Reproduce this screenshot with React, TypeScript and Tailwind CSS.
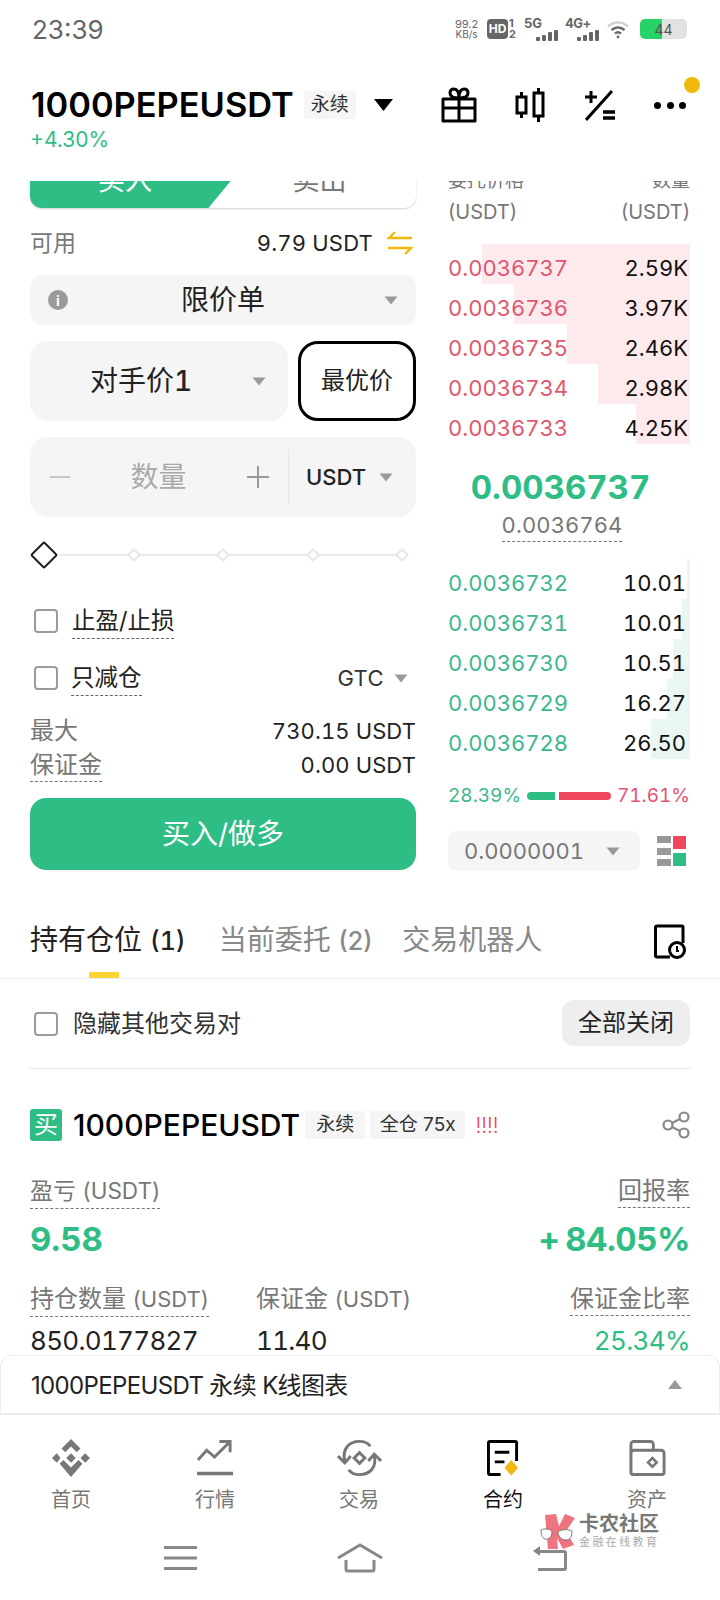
import React from "react";

const asks = [
  { price: "0.0036737", qty: "2.59K", left: "w-[208px]" },
  { price: "0.0036736", qty: "3.97K", left: "w-[176px]" },
  { price: "0.0036735", qty: "2.46K", left: "w-[123px]" },
  { price: "0.0036734", qty: "2.98K", left: "w-[92px]" },
  { price: "0.0036733", qty: "4.25K", left: "w-[54px]" },
];

const bids = [
  { price: "0.0036732", qty: "10.01", left: "w-[3px]" },
  { price: "0.0036731", qty: "10.01", left: "w-[8px]" },
  { price: "0.0036730", qty: "10.51", left: "w-[17px]" },
  { price: "0.0036729", qty: "16.27", left: "w-[23px]" },
  { price: "0.0036728", qty: "26.50", left: "w-[39px]" },
];

function Caret({ className = "" }: { className?: string }) {
  return (
    <svg viewBox="0 0 14 9" className={`w-[14px] h-[9px] fill-[#9a9a9a] ${className}`}>
      <path d="M0.5 0.5h13L7 8.5z" />
    </svg>
  );
}

function Checkbox() {
  return <span className="w-6 h-6 rounded-[4px] border-2 border-[#9b9b9b] bg-white shrink-0" />;
}

function Dot({ active = false }: { active?: boolean }) {
  return (
    <span className="relative w-[20px] flex items-center justify-center">
      {active ? (
        <span className="w-[20px] h-[20px] rotate-45 border-2 border-[#222] bg-white rounded-[2px] shrink-0" />
      ) : (
        <span className="w-[10px] h-[10px] rotate-45 border-2 border-[#e8e8e8] bg-white rounded-[1px] shrink-0" />
      )}
    </span>
  );
}

function SignalBars() {
  return (
    <div className="absolute right-0 bottom-0 flex items-end gap-[2px]">
      <span className="w-[4px] h-[4px] bg-[#666] rounded-[1px]" />
      <span className="w-[4px] h-[6px] bg-[#666] rounded-[1px]" />
      <span className="w-[4px] h-[9px] bg-[#666] rounded-[1px]" />
      <span className="w-[4px] h-[11px] bg-[#666] rounded-[1px]" />
    </div>
  );
}

function StatusBar() {
  return (
    <div className="h-[58px] pl-[32px] pr-[33px] flex items-center justify-between">
      <span className="text-[26px] text-[#666]">23:39</span>
      <div className="flex items-center text-[#666]">
        <div className="w-[25px] flex flex-col items-center text-[10px] leading-[10px]">
          <span className="text-[11px]">99.2</span>
          <span>KB/s</span>
        </div>
        <div className="ml-[8px] w-[21px] h-[20px] rounded-[4px] bg-[#666] text-white text-[12px] font-bold flex items-center justify-center">
          HD
        </div>
        <div className="ml-[1px] flex flex-col text-[11px] leading-[11px] font-bold">
          <span>1</span>
          <span>2</span>
        </div>
        <div className="ml-[8px] w-[34px] relative h-[24px]">
          <span className="absolute left-0 -top-[3px] text-[13px] font-bold">5G</span>
          <SignalBars />
        </div>
        <div className="ml-[7px] w-[34px] relative h-[24px]">
          <span className="absolute left-0 -top-[3px] text-[13px] font-bold tracking-[-0.5px]">4G+</span>
          <SignalBars />
        </div>
        <svg viewBox="0 0 24 20" className="ml-[8px] w-[24px] h-[20px] fill-none stroke-[#666]" strokeWidth="2.4">
          <path d="M1 7.5c6-5.5 14-5.5 20 0" stroke="#cfcfcf" />
          <path d="M4.5 11c4-3.5 9-3.5 13 0" />
          <path d="M8 14.5c2-1.6 4-1.6 6 0" />
          <circle cx="11" cy="18" r="1.4" fill="#666" stroke="none" />
        </svg>
        <div className="ml-[9px] w-[47px] h-[20px] rounded-[5px] bg-[#e2e2e2] overflow-hidden relative flex items-center justify-center">
          <div className="absolute left-0 inset-y-0 w-[22px] bg-[#25d366]" />
          <span className="relative text-[14px] text-[#555]">44</span>
        </div>
      </div>
    </div>
  );
}

function Header() {
  return (
    <div className="h-[123px] pl-[31px] pr-[34px] relative">
      <div className="flex items-center pt-[28px]">
        <span className="text-[34.4px] leading-[38px] font-semibold text-black">1000PEPEUSDT</span>
        <span className="ml-[10px] w-[52px] h-[28px] bg-[#f5f5f5] rounded-[2px] text-[19px] text-[#333] flex items-center justify-center">
          永续
        </span>
        <svg viewBox="0 0 19 12" className="ml-[18px] w-[19px] h-[12px] fill-black">
          <path d="M0 0h19L9.5 12z" />
        </svg>
        <div className="ml-auto flex items-center">
          <svg viewBox="0 0 36 36" className="w-[36px] h-[36px] fill-none stroke-black" strokeWidth="3" strokeLinejoin="round">
            <path d="M2 12h32v22H2zM2 21h32M18 12v22" />
            <path d="M18 11c-7 0-9-2-9-5s2-4 4-4c3 0 5 3 5 9zM18 11c7 0 9-2 9-5s-2-4-4-4c-3 0-5 3-5 9z" />
          </svg>
          <svg viewBox="0 0 30 34" className="ml-[38px] w-[30px] h-[34px] fill-none stroke-black" strokeWidth="3">
            <path d="M2 9h9v16H2zM6.5 4v5M6.5 25v5M19 5h9v23h-9zM23.5 0v5M23.5 28v6" />
          </svg>
          <svg viewBox="0 0 30 32" className="ml-[40px] w-[30px] h-[32px] fill-none stroke-black" strokeWidth="3">
            <path d="M1 31 27 2M0 8h12M6 2v12" />
            <path d="M18 23h12M18 29h12" strokeWidth="3.4" />
          </svg>
          <div className="ml-[39px] w-[32px] flex items-center justify-between">
            <span className="w-[7px] h-[7px] rounded-full bg-black" />
            <span className="w-[7px] h-[7px] rounded-full bg-black" />
            <span className="w-[7px] h-[7px] rounded-full bg-black" />
          </div>
        </div>
      </div>
      <div className="text-[21px] leading-[26px] mt-[3px] text-[#2ebd85] -ml-[1px]">+4.30%</div>
      <span className="absolute right-[20px] top-[19px] w-4 h-4 rounded-full bg-[#f0b90b]" />
    </div>
  );
}

function OrderForm() {
  return (
    <div className="w-[386px] shrink-0">
      {/* buy/sell switch, half scrolled away */}
      <div className="-mt-[27px] h-[54px] rounded-b-[12px] bg-white shadow-[0_1px_2px_rgba(0,0,0,0.18)] flex relative">
        <div className="w-[223px] bg-[#2ebd85] rounded-bl-[12px] [clip-path:polygon(0_0,100%_0,80%_100%,0_100%)] flex items-center justify-center text-white text-[27px] pr-[33px]">
          买入
        </div>
        <div className="flex-1 flex items-center justify-center text-[#777] text-[27px] pr-[30px]">卖出</div>
      </div>

      <div className="mt-[17px] h-[36px] flex items-center text-[22px]">
        <span className="text-[#777] text-[23px]">可用</span>
        <span className="ml-auto text-[#222] tracking-[0.2px] tabular-nums">9.79 USDT</span>
        <svg viewBox="0 0 26 24" className="ml-[14px] mr-[3px] w-[26px] h-[24px] fill-none stroke-[#f0b90b]" strokeWidth="2.4">
          <path d="M25 7H2L8 1M1 17h23l-6 6" />
        </svg>
      </div>

      <div className="mt-[14px] h-[50px] rounded-[12px] bg-[#f5f5f5] flex items-center relative px-[18px]">
        <span className="w-5 h-5 rounded-full bg-[#9a9a9a] text-white text-[14px] font-bold flex items-center justify-center">i</span>
        <span className="flex-1 text-center text-[28px] text-[#222] pr-[6px]">限价单</span>
        <Caret />
      </div>

      <div className="mt-[16px] flex gap-[10px]">
        <div className="w-[258px] h-[80px] rounded-[18px] bg-[#f5f5f5] flex items-center pr-[22px]">
          <span className="flex-1 text-center text-[28px] text-[#222] tabular-nums">对手价<span className="font-medium">1</span></span>
          <Caret />
        </div>
        <div className="w-[118px] h-[80px] rounded-[20px] border-[3px] border-black bg-white flex items-center justify-center text-[24px] text-[#222]">
          最优价
        </div>
      </div>

      <div className="mt-[16px] h-[80px] rounded-[18px] bg-[#f5f5f5] flex items-center">
        <div className="w-[258px] flex items-center pl-[20px] pr-[19px]">
          <span className="w-[20px] h-[2px] bg-[#c8c8c8]" />
          <span className="flex-1 text-center text-[28px] text-[#aaa]">数量</span>
          <svg viewBox="0 0 22 22" className="w-[22px] h-[22px] stroke-[#999]" strokeWidth="2">
            <path d="M0 11h22M11 0v22" />
          </svg>
        </div>
        <div className="self-stretch my-[12px] w-[1px] bg-[#e8e8e8]" />
        <span className="ml-[17px] text-[22px] font-medium text-[#222]">USDT</span>
        <Caret className="ml-[13px]" />
      </div>

      {/* leverage slider */}
      <div className="mt-[24px] h-[28px] relative flex items-center justify-between px-[4px]">
        <div className="absolute left-[14px] right-[14px] h-[2px] bg-[#ececec]" />
        <Dot active />
        <Dot />
        <Dot />
        <Dot />
        <Dot />
      </div>

      <div className="mt-[32px] h-[40px] flex items-center pl-[4px]">
        <Checkbox />
        <span className="ml-[14px] text-[23.5px] leading-[34px] text-[#222] border-b border-dashed border-[#666]">止盈/止损</span>
      </div>
      <div className="mt-[17px] h-[40px] flex items-center pl-[4px]">
        <Checkbox />
        <span className="ml-[13px] text-[23.5px] leading-[34px] text-[#222] border-b border-dashed border-[#666]">只减仓</span>
        <span className="ml-auto text-[22px] text-[#333] tracking-[0.4px]">GTC</span>
        <Caret className="ml-[10px] mr-[8px]" />
      </div>

      <div className="mt-[16px] h-[34px] flex items-center justify-between">
        <span className="text-[24px] text-[#777]">最大</span>
        <span className="text-[22px] text-[#222] tracking-[0.1px] tabular-nums">730.15 USDT</span>
      </div>
      <div className="h-[34px] flex items-center justify-between">
        <span className="text-[24px] leading-[33px] text-[#777] border-b border-dashed border-[#777]">保证金</span>
        <span className="text-[22px] text-[#222] tracking-[0.1px] tabular-nums">0.00 USDT</span>
      </div>

      <div className="mt-[16px] h-[72px] rounded-[16px] bg-[#2ebd85] flex items-center justify-center text-white text-[28px]">
        买入/做多
      </div>
    </div>
  );
}

function OrderBook() {
  return (
    <div className="flex-1 min-w-0">
      <div className="-mt-[14px] h-[28px] flex items-center justify-between text-[19px] leading-[28px] text-[#777]">
        <span>委托价格</span>
        <span>数量</span>
      </div>
      <div className="h-[34px] flex items-center justify-between text-[20px] text-[#777]">
        <span>(USDT)</span>
        <span>(USDT)</span>
      </div>

      <div className="mt-[19px]">
        {asks.map((row) => (
          <div key={row.price} className="h-[40px] relative flex items-center justify-between text-[22px] tabular-nums">
            <div className={`absolute right-0 -top-[4px] bottom-[4px] bg-[#fdeaec] ${row.left}`} />
            <span className="relative text-[#e2566f]">{row.price}</span>
            <span className="relative text-[#111] pr-[2px]">{row.qty}</span>
          </div>
        ))}
      </div>

      <div className="mt-[15px] text-center text-[33px] leading-[48px] font-bold text-[#2ebd85] pr-[17px] tabular-nums">0.0036737</div>
      <div className="flex justify-center pr-[14px]">
        <span className="text-[22px] leading-[31px] -mt-[1px] text-[#777] border-b border-dashed border-[#777] tabular-nums tracking-[0.1px]">0.0036764</span>
      </div>

      <div className="mt-[21px]">
        {bids.map((row) => (
          <div key={row.price} className="h-[40px] relative flex items-center justify-between text-[22px] tabular-nums">
            <div className={`absolute right-0 -top-[4px] bottom-[4px] bg-[#e9f6f1] ${row.left}`} />
            <span className="relative text-[#3bb78f]">{row.price}</span>
            <span className="relative text-[#111] pr-[4px]">{row.qty}</span>
          </div>
        ))}
      </div>

      <div className="mt-[17px] h-[32px] flex items-center justify-between text-[19px] tabular-nums">
        <span className="text-[#3bb78f]">28.39%</span>
        <div className="flex gap-[4px]">
          <span className="w-[28px] h-[8px] bg-[#2ebd85] rounded-l-full" />
          <span className="w-[52px] h-[8px] bg-[#f0475f] rounded-r-full" />
        </div>
        <span className="text-[#e2566f]">71.61%</span>
      </div>

      <div className="mt-[19px] flex items-center justify-between">
        <div className="w-[192px] h-[40px] rounded-[8px] bg-[#f5f5f5] flex items-center pl-[16px] pr-[20px] justify-between">
          <span className="text-[22px] text-[#777] tabular-nums">0.0000001</span>
          <Caret />
        </div>
        <div className="mr-[4px] grid grid-cols-[14px_13px] gap-x-[2px] w-[29px] h-[30px]">
          <div className="flex flex-col justify-between">
            <span className="h-[7px] bg-[#999]" />
            <span className="h-[7px] bg-[#999]" />
            <span className="h-[7px] bg-[#999]" />
          </div>
          <div className="flex flex-col justify-between">
            <span className="h-[13px] bg-[#f0475f]" />
            <span className="h-[13px] bg-[#2ebd85]" />
          </div>
        </div>
      </div>
    </div>
  );
}

function PositionTabs() {
  return (
    <>
      <div className="mt-[39px] h-[69px] border-b border-[#eee] relative pl-[30px] pr-[34px] flex items-start pt-[9px]">
        <span className="text-[28px] leading-[42px] text-[#222]">
          持有仓位 <span className="text-[25px] font-medium tabular-nums">(1)</span>
        </span>
        <span className="ml-[33px] text-[28px] leading-[42px] text-[#888]">
          当前委托 <span className="text-[25px] font-medium">(2)</span>
        </span>
        <span className="ml-[30px] text-[28px] leading-[42px] text-[#888]">交易机器人</span>
        <svg viewBox="0 0 32 36" className="ml-auto mt-[5px] w-[32px] h-[36px] fill-none stroke-black" strokeWidth="3">
          <path d="M16 33H3a1.5 1.5 0 0 1-1.5-1.5v-28A1.5 1.5 0 0 1 3 2h25a1 1 0 0 1 1 1v16" />
          <circle cx="23" cy="26" r="7.5" />
          <path d="M23 22v5h2" strokeWidth="2" />
        </svg>
        <span className="absolute left-[89px] bottom-0 w-[30px] h-[6px] bg-[#fcd535]" />
      </div>
      <div className="h-[90px] mx-[30px] border-b border-[#e8e8e8] flex items-center pl-[4px]">
        <Checkbox />
        <span className="ml-[15px] text-[24px] text-[#333]">隐藏其他交易对</span>
        <span className="ml-auto w-[128px] h-[46px] rounded-[12px] bg-[#eee] text-[24px] text-[#222] flex items-center justify-center mt-[-2px]">
          全部关闭
        </span>
      </div>
    </>
  );
}

function PositionCard() {
  return (
    <div className="px-[30px] pt-[39px]">
      <div className="h-[34px] flex items-center">
        <span className="w-[32px] h-[32px] rounded-[3px] bg-[#2ebd85] text-white text-[24px] flex items-center justify-center">买</span>
        <span className="ml-[11px] text-[30px] font-medium text-black">1000PEPEUSDT</span>
        <span className="ml-[5px] w-[60px] h-[28px] rounded-[2px] bg-[#f5f5f5] text-[19px] text-[#333] flex items-center justify-center">永续</span>
        <span className="ml-[5px] w-[95px] h-[28px] rounded-[2px] bg-[#f5f5f5] text-[19px] text-[#333] flex items-center justify-center">全仓 75x</span>
        <span className="ml-[10px] text-[22px] text-[#f0475f] font-light tracking-[-0.4px]">!!!!</span>
        <svg viewBox="0 0 28 28" className="ml-auto w-[28px] h-[28px] fill-none stroke-[#888]" strokeWidth="2.2">
          <circle cx="22" cy="6" r="4.5" />
          <circle cx="6" cy="14" r="4.5" />
          <circle cx="22" cy="22" r="4.5" />
          <path d="M10 12l8-4M10 16l8 4" />
        </svg>
      </div>

      <div className="mt-[32px] flex justify-between items-start">
        <span className="text-[23px] leading-[33px] text-[#777] border-b border-dashed border-[#777]">盈亏 <span className="text-[22.5px]">(USDT)</span></span>
        <span className="text-[24px] leading-[33px] text-[#777] border-b border-dashed border-[#777]">回报率</span>
      </div>
      <div className="mt-[5px] flex justify-between items-center text-[33px] leading-[50px] font-bold text-[#2ebd85] tabular-nums">
        <span>9.58</span>
        <span className="tracking-[-0.5px]">
          +<span className="ml-[6px]">84.05%</span>
        </span>
      </div>

      <div className="mt-[18px] flex items-start">
        <span className="w-[226px] shrink-0">
          <span className="inline-block text-[24px] leading-[33px] text-[#777] border-b border-dashed border-[#777]">持仓数量 <span className="text-[22px]">(USDT)</span></span>
        </span>
        <span className="text-[24px] leading-[33px] text-[#777]">保证金 <span className="text-[22px]">(USDT)</span></span>
        <span className="ml-auto text-[24px] leading-[33px] text-[#777] border-b border-dashed border-[#777]">保证金比率</span>
      </div>
      <div className="mt-[4px] flex items-center text-[26px] leading-[40px] text-[#222] tabular-nums tracking-[-0.7px]">
        <span className="w-[226px] shrink-0">850.0177827</span>
        <span>11.40</span>
        <span className="ml-auto text-[#2ebd85] tracking-[-0.6px]">25.34%</span>
      </div>
    </div>
  );
}

function ChartBar() {
  return (
    <div className="h-[60px] shrink-0 rounded-t-[12px] border border-b-2 border-[#eee] bg-white flex items-center pl-[30px] pr-[37px] relative">
      <span className="text-[24px] text-[#222] tracking-[-0.65px] pt-[3px]">1000PEPEUSDT 永续 K线图表</span>
      <svg viewBox="0 0 14 9" className="ml-auto w-[14px] h-[9px] fill-[#999]">
        <path d="M7 0l7 9H0z" />
      </svg>
    </div>
  );
}

function NavItem({ label, active = false, children }: { label: string; active?: boolean; children: React.ReactNode }) {
  return (
    <div className={`w-[144px] flex flex-col items-center ${active ? "text-[#111]" : "text-[#777]"}`}>
      <div className="h-[40px] flex items-center justify-center">{children}</div>
      <span className="mt-[5px] text-[20px] leading-[34px]">{label}</span>
    </div>
  );
}

function BottomNav() {
  return (
    <div className="pt-[23px] -ml-[1px] flex">
      <NavItem label="首页">
        <svg viewBox="0 0 40 40" className="w-[38px] h-[38px] fill-[#777]">
          <path d="M20 0l10 10-4 4-6-6-6 6-4-4zM5 15l4 5-4 5-5-5zM35 15l5 5-5 5-5-5zM20 15l5 5-5 5-5-5zM8 26l4-4 8 8 8-8 4 4-12 14z" />
        </svg>
      </NavItem>
      <NavItem label="行情">
        <svg viewBox="0 0 38 38" className="w-[37px] h-[38px] fill-none stroke-[#777]" strokeWidth="3">
          <path d="M1 21l9-10 8 7L33 3M23 2h11v11" />
          <path d="M0 35h37" strokeWidth="3.6" />
        </svg>
      </NavItem>
      <NavItem label="交易">
        <svg viewBox="0 0 46 38" className="w-[45px] h-[38px] fill-none stroke-[#777]" strokeWidth="3">
          <path d="M8 22C5 10 12 2 23 2c5 0 9 2 11 5M38 16c3 12-4 20-15 20-5 0-9-2-11-5" />
          <path d="M1 17l7 7 6-7M32 22l6-7 7 7" />
          <path d="M23 13.5l5.5 5.5-5.5 5.5-5.5-5.5z" />
        </svg>
      </NavItem>
      <NavItem label="合约" active>
        <svg viewBox="0 0 34 38" className="w-[33px] h-[38px] fill-none stroke-black" strokeWidth="3">
          <path d="M14 36H3a1.5 1.5 0 0 1-1.5-1.5v-31A1.5 1.5 0 0 1 3 2h26a1.5 1.5 0 0 1 1.5 1.5V22" />
          <path d="M8 13h15M8 23h10" />
          <path d="M25 21l7 8-7 8-7-8z" fill="#f0b90b" stroke="none" />
        </svg>
      </NavItem>
      <NavItem label="资产">
        <svg viewBox="0 0 38 38" className="w-[37px] h-[38px] fill-none stroke-[#777]" strokeWidth="3">
          <path d="M2 34V5a3 3 0 0 1 3-3h17a3 3 0 0 1 3 3v6M2 14a3 3 0 0 1 3-3h28a3 3 0 0 1 3 3v20a2 2 0 0 1-2 2H4a2 2 0 0 1-2-2z" />
          <path d="M24 19l4.5 4.5-4.5 4.5-4.5-4.5z" strokeWidth="2.6" />
        </svg>
      </NavItem>
    </div>
  );
}

function SystemBar() {
  return (
    <div className="mt-[21px] h-[40px] relative flex items-center">
      <svg viewBox="0 0 33 24" className="ml-[164px] w-[33px] h-[24px] stroke-[#888]" strokeWidth="3">
        <path d="M0 1.5h33M0 12h33M0 22.5h33" />
      </svg>
      <svg viewBox="0 0 46 30" className="ml-[140px] w-[46px] h-[30px] fill-none stroke-[#888]" strokeWidth="3">
        <path d="M1 15 23 2l22 13M9 17v9a2 2 0 0 0 2 2h24a2 2 0 0 0 2-2v-9" />
      </svg>
      <svg viewBox="0 0 34 26" className="ml-[150px] w-[34px] h-[26px] fill-none stroke-[#888]" strokeWidth="3">
        <path d="M5 24.5h26a1.5 1.5 0 0 0 1.5-1.5V8a1.5 1.5 0 0 0-1.5-1.5H5" />
        <path d="M7 1v10L0 6z" fill="#888" stroke="none" />
      </svg>
    </div>
  );
}

// community stamp that sits over the tab bar
function Stamp() {
  return (
    <div className="absolute left-[538px] top-[1511px] w-[124px] h-[40px] flex items-center">
      <svg viewBox="0 0 40 38" className="w-[40px] h-[38px] shrink-0">
        <path d="M7 3l11-1 3 12L27 2l10 4-9 13 8 14-11 4-6-11 1 11H10z" fill="#ee7480" />
        <path d="M3 18c4-2 8-1 11 1 0 6-3 9-7 8-3-1-4-5-4-9zM20 20c4-3 9-3 14-1 0 6-2 9-6 9-5 0-8-4-8-8z" fill="#fff" stroke="#777" strokeWidth="1" />
      </svg>
      <div className="ml-[1px] flex flex-col">
        <span className="text-[20px] leading-[22px] font-bold text-[#777] whitespace-nowrap">卡农社区</span>
        <span className="text-[11px] leading-[15px] tracking-[2.4px] text-[#aaa] whitespace-nowrap">金融在线教育</span>
      </div>
    </div>
  );
}

export default function App() {
  return (
    <div className="w-[720px] h-[1600px] bg-white overflow-hidden relative flex flex-col font-['Inter','Noto_Sans_CJK_SC',sans-serif]">
      <StatusBar />
      <Header />
      <div className="flex-1 min-h-0 overflow-hidden">
        <div className="pl-[30px] pr-[30px] flex gap-[32px]">
          <OrderForm />
          <OrderBook />
        </div>
        <PositionTabs />
        <PositionCard />
      </div>
      <ChartBar />
      <div className="h-[185px] shrink-0">
        <BottomNav />
        <SystemBar />
      </div>
      <Stamp />
    </div>
  );
}
